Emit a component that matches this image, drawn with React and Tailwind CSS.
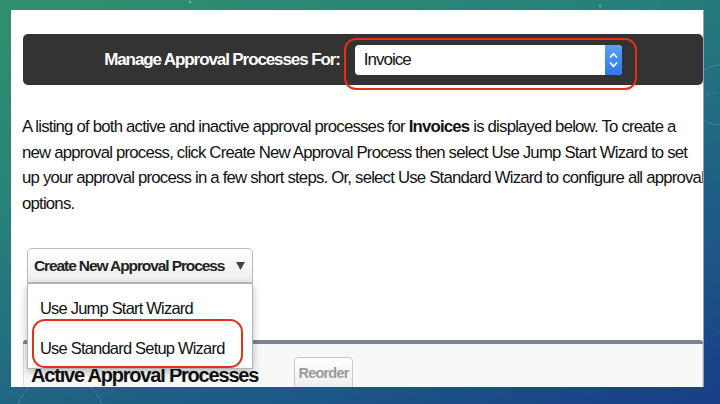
import React from 'react';

const Decor = () => (
  <svg className="absolute inset-0 h-full w-full" viewBox="0 0 720 404" fill="none">
    <circle cx="700" cy="40" r="55" stroke="#ffffff" strokeOpacity="0.18" strokeDasharray="3 4" />
    <circle cx="720" cy="95" r="30" stroke="#ffffff" strokeOpacity="0.14" />
    <circle cx="60" cy="420" r="45" stroke="#ffffff" strokeOpacity="0.16" />
    <circle cx="695" cy="300" r="40" stroke="#ffffff" strokeOpacity="0.12" strokeDasharray="2 5" />
    <circle cx="190" cy="2" r="1.5" fill="#ffffff" fillOpacity="0.3" />
    <circle cx="600" cy="6" r="1.5" fill="#ffffff" fillOpacity="0.25" />
  </svg>
);

const Stepper = () => (
  <div className="flex w-[17px] items-center justify-center rounded-r-[4px] bg-[linear-gradient(180deg,#5aa0f7,#2f78e6)]">
    <svg width="17" height="30" viewBox="0 0 17 30" fill="none" stroke="#fff" strokeWidth="1.7" strokeLinecap="round" strokeLinejoin="round">
      <path d="M5.5 12 L8.5 8.5 L11.5 12" />
      <path d="M5.5 18 L8.5 21.5 L11.5 18" />
    </svg>
  </div>
);

export default function App() {
  return (
    <div className="relative h-[404px] w-[720px] overflow-hidden bg-[linear-gradient(160deg,#30906c_0%,#26807a_35%,#1d5d86_70%,#183e88_100%)] pl-[11px] pt-[10px] font-['Liberation_Sans',Arial,sans-serif]">
      <Decor />
      <div className="relative h-[377px] w-[693px] overflow-hidden border-r border-[#9aa3ad] bg-white pl-[11px]">
        {/* header bar */}
        <div className="ml-px mt-[24px] flex h-[51px] w-[680px] items-center justify-center gap-[15px] rounded-[5px] bg-[#333333]">
          <span className="whitespace-nowrap text-[17px] font-bold tracking-[-1.1px] text-white">Manage Approval Processes For:</span>
          <div className="relative flex h-[30px] w-[267px] shrink-0 rounded-[4px] bg-white">
            <span className="flex flex-1 items-center pl-[9px] text-[17px] tracking-[-1px] text-[#111]">Invoice</span>
            <Stepper />
            <div className="absolute -bottom-[15px] -left-[11px] -right-[15px] -top-[7px] rounded-[12px] border-2 border-[#e2301c]" />
          </div>
        </div>

        <p className="mt-[29px] whitespace-nowrap text-[16.75px] leading-[25.5px] tracking-[-0.79px] text-[#111]">
          <span className="block">A listing of both active and inactive approval processes for <b>Invoices</b> is displayed below. To create a</span>
          <span className="block">new approval process, click Create New Approval Process then select Use Jump Start Wizard to set</span>
          <span className="block">up your approval process in a few short steps. Or, select Use Standard Wizard to configure all approval</span>
          <span className="block">options.</span>
        </p>

        {/* create button + open menu */}
        <div className="relative z-10 ml-[5px] mt-[32px] w-[226px]">
          <div className="flex h-[35px] items-center justify-between rounded-t-[5px] border border-[#bdbdbd] bg-[linear-gradient(180deg,#ffffff,#ededed)] pl-[6px] pr-[7px]">
            <span className="whitespace-nowrap text-[15.5px] font-bold tracking-[-1.1px] text-[#222]">Create New Approval Process</span>
            <svg width="9" height="8" viewBox="0 0 9 8"><path d="M0 0 H9 L4.5 8 Z" fill="#444" /></svg>
          </div>
          <div className="absolute left-0 top-full w-[226px] whitespace-nowrap border border-[#b3b3b3] bg-white pt-[4px] text-[16.5px] tracking-[-0.8px] text-[#111] shadow-[0_3px_8px_rgba(0,0,0,0.25)]">
            <div className="flex h-[40px] items-center pl-[12px]">Use Jump Start Wizard</div>
            <div className="relative flex h-[40px] items-center pl-[12px]">
              Use Standard Setup Wizard
              <div className="absolute -top-[9px] bottom-0 left-[4px] right-[9px] rounded-[13px] border-2 border-[#e2301c]" />
            </div>
          </div>
        </div>

        {/* active processes section */}
        <div className="ml-px mt-[57px] w-[680px]">
          <div className="h-[4px] rounded-t-[3px] bg-[#7b8597]" />
          <div className="flex h-[60px] items-start border-x border-[#dcdcdc] bg-[#f8f8f8] pl-[7px]">
            <h2 className="mt-[18px] w-[263px] whitespace-nowrap text-[20px] font-bold leading-[26px] tracking-[-1.2px] text-[#111]">Active Approval Processes</h2>
            <button className="mt-[13px] h-[34px] w-[59px] rounded-[4px] border border-[#c8c8c8] bg-[linear-gradient(180deg,#ffffff,#ececec)] text-[14.5px] font-bold tracking-[-0.8px] text-[#9a9a9a]">Reorder</button>
          </div>
        </div>
      </div>
    </div>
  );
}
